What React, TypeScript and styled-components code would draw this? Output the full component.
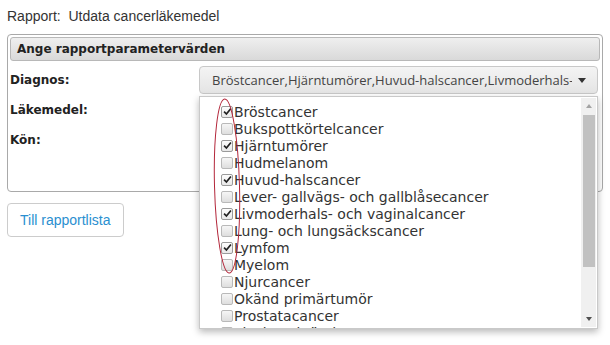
import React from "react";
import styled, {createGlobalStyle, css} from "styled-components";

const GlobalStyle = createGlobalStyle`
  html, body {
    margin: 0;
    padding: 0;
    background: #fff;
  }
  body {
    font-family: "Liberation Sans", Arial, sans-serif;
    color: #333;
  }
`;

const diagnoses: {name: string; checked: boolean}[] = [
  {name: "Bröstcancer", checked: true},
  {name: "Bukspottkörtelcancer", checked: false},
  {name: "Hjärntumörer", checked: true},
  {name: "Hudmelanom", checked: false},
  {name: "Huvud-halscancer", checked: true},
  {name: "Lever- gallvägs- och gallblåsecancer", checked: false},
  {name: "Livmoderhals- och vaginalcancer", checked: true},
  {name: "Lung- och lungsäckscancer", checked: false},
  {name: "Lymfom", checked: true},
  {name: "Myelom", checked: false},
  {name: "Njurcancer", checked: false},
  {name: "Okänd primärtumör", checked: false},
  {name: "Prostatacancer", checked: false},
  {name: "Tjock- och ändtarmscancer", checked: false},
];

export default function App() {
  const selected = diagnoses.filter(d => d.checked).map(d => d.name).join(",");

  return (
    <Page>
      <GlobalStyle/>
      <Title>Rapport:&nbsp; Utdata cancerläkemedel</Title>
      <Panel>
        <PanelHeader>Ange rapportparametervärden</PanelHeader>
        <Form>
          <Label>Diagnos:</Label>
          <SelectWrap>
            <SelectButton>
              <SelectText>{selected}</SelectText>
              <Caret/>
            </SelectButton>
            <Dropdown>
              <List>
                {diagnoses.map(d => (
                  <Item key={d.name}>
                    <Check checked={d.checked}>
                      {d.checked && (
                        <svg viewBox="0 0 10 10" width="9" height="9">
                          <path d="M1.2 5.2 L3.8 7.8 L8.8 1.6" fill="none" stroke="#222" strokeWidth="1.9"/>
                        </svg>
                      )}
                    </Check>
                    {d.name}
                  </Item>
                ))}
              </List>
              <Scrollbar>
                <Arrow up/>
                <Track>
                  <Thumb/>
                </Track>
                <Arrow/>
              </Scrollbar>
              <Annotation viewBox="0 0 28 178" width="28" height="178">
                <ellipse cx="14" cy="89" rx="12.5" ry="87" fill="none" stroke="#b3263a" strokeWidth="1"
                         transform="rotate(-1.5 14 89)"/>
              </Annotation>
            </Dropdown>
          </SelectWrap>
          <Label>Läkemedel:</Label>
          <Hidden/>
          <Label>Kön:</Label>
          <Hidden/>
        </Form>
      </Panel>
      <BackButton>Till rapportlista</BackButton>
    </Page>
  );
}

const Page = styled.div`
  box-sizing: border-box;
  padding: 7px 7px 0 7px;
  width: 610px;
  min-height: 345px;
`;

const Title = styled.div`
  font-size: 14px;
  line-height: 18px;
  height: 20px;
  color: #333;
`;

const Panel = styled.div`
  margin-top: 7px;
  border: 1px solid #a9a9a9;
  border-radius: 4px;
  padding: 2px;
  height: 152px;
`;

const PanelHeader = styled.div`
  height: 22px;
  line-height: 22px;
  border: 1px solid #b8b8b8;
  border-radius: 3px;
  background: linear-gradient(#efefef, #d9d9d9);
  padding-left: 6px;
  font-family: "DejaVu Sans", Verdana, sans-serif;
  font-weight: bold;
  font-size: 12px;
  color: #222;
`;

const Form = styled.div`
  display: grid;
  grid-template-columns: 189px minmax(0, 1fr);
  grid-auto-rows: 30px;
  margin-top: 4px;
  margin-right: 2px;
  align-items: center;
`;

const Label = styled.div`
  font-family: "DejaVu Sans", Verdana, sans-serif;
  font-weight: bold;
  font-size: 12px;
  color: #222;
  height: 30px;
  line-height: 30px;
`;

const SelectWrap = styled.div`
  position: relative;
  min-width: 0;
  height: 28px;
`;

const SelectButton = styled.div`
  display: flex;
  align-items: center;
  justify-content: space-between;
  height: 26px;
  border: 1px solid #c8c8c8;
  border-radius: 4px;
  background: linear-gradient(#f4f4f4, #e4e4e4);
  padding: 0 11px 0 12px;
`;

const SelectText = styled.span`
  width: 360px;
  white-space: nowrap;
  overflow: hidden;
  font-family: "Open Sans", "Segoe UI", sans-serif;
  font-size: 13px;
  color: #444;
`;

const Caret = styled.span`
  flex-shrink: 0;
  width: 0;
  height: 0;
  border-left: 4px solid transparent;
  border-right: 4px solid transparent;
  border-top: 5px solid #333;
`;

const Hidden = styled.div`
  height: 26px;
  border: 1px solid #c8c8c8;
  border-radius: 4px;
  background: #f2f2f2;
`;

const Dropdown = styled.div`
  position: absolute;
  top: 30px;
  left: 0;
  width: 397px;
  height: 231px;
  border: 1px solid #c9c9c9;
  background: #fff;
  box-shadow: 0 3px 7px rgba(0, 0, 0, 0.28);
  display: flex;
  overflow: hidden;
  z-index: 2;
`;

const List = styled.div`
  flex: 1;
  padding: 6px 0 0 21px;
  display: flex;
  flex-direction: column;
`;

const Item = styled.div`
  display: flex;
  align-items: center;
  height: 17px;
  flex-shrink: 0;
  font-family: "DejaVu Sans", Verdana, sans-serif;
  font-size: 14px;
  color: #333;
  white-space: nowrap;
`;

const Check = styled.span<{checked?: boolean}>`
  box-sizing: border-box;
  display: inline-flex;
  align-items: center;
  justify-content: center;
  width: 12px;
  height: 12px;
  margin-right: 1px;
  border: 1px solid #b9b9b9;
  border-radius: 2px;
  background: linear-gradient(#f6f6f6, #dedede);
  ${({checked}) => checked && css`
    border-color: #9a9a9a;
    background: linear-gradient(#fdfdfd, #e8e8e8);
  `}
`;

const Scrollbar = styled.div`
  width: 15px;
  margin: 1px 1px 1px 0;
  background: #f0f0f0;
  display: flex;
  flex-direction: column;
  align-items: center;
`;

const Arrow = styled.span<{up?: boolean}>`
  flex: 0 0 0;
  width: 0;
  height: 0;
  margin: 6px 0;
  border-left: 3.5px solid transparent;
  border-right: 3.5px solid transparent;
  ${({up}) => up
    ? css`border-bottom: 4px solid #a3a3a3;`
    : css`border-top: 4px solid #505050;`}
`;

const Track = styled.div`
  flex: 1;
  width: 100%;
  display: flex;
  justify-content: center;
`;

const Thumb = styled.div`
  width: 12px;
  height: 152px;
  margin-top: 1px;
  background: #c1c1c1;
`;

const Annotation = styled.svg`
  position: absolute;
  left: 13px;
  top: 0;
  pointer-events: none;
`;

const BackButton = styled.button`
  display: block;
  margin-top: 11px;
  height: 34px;
  padding: 0 12px;
  border: 1px solid #ccc;
  border-radius: 4px;
  background: #fff;
  color: #2a8fd0;
  font-family: "Liberation Sans", Arial, sans-serif;
  font-size: 14px;
`;
